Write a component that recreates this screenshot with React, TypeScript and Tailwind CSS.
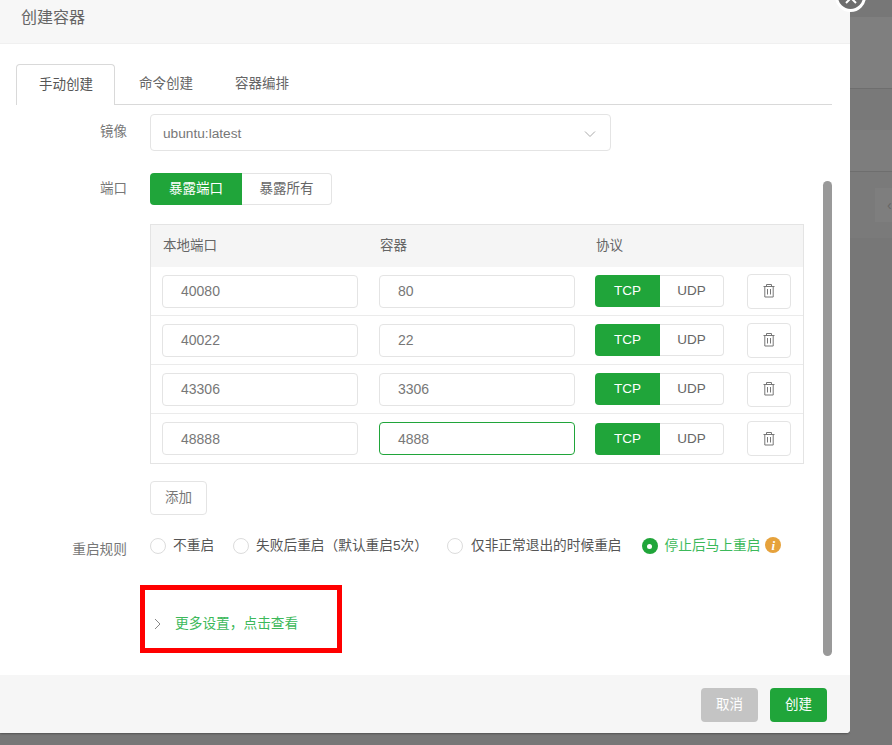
import React from "react";

const ports = [
    { local: "40080", target: "80" },
    { local: "40022", target: "22" },
    { local: "43306", target: "3306" },
    { local: "48888", target: "4888", focused: true },
];

const restartRules = [
    { label: "不重启", gap: "mr-[19px]", textGap: "mr-[7px]" },
    { label: "失败后重启（默认重启5次）", gap: "mr-[19px]", textGap: "mr-[7px]" },
    { label: "仅非正常退出的时候重启", gap: "mr-[20px]", textGap: "mr-[8px]" },
];

function TrashIcon() {
    return (
        <svg width="16" height="16" viewBox="0 0 16 16" fill="none" stroke="#777" strokeWidth="1">
            <path d="M2.5 3.5h11M5.5 3.5v-2h5v2M3.8 3.5v10.5h8.4V3.5" />
            <path d="M6.5 6v5.5M9.5 6v5.5" />
        </svg>
    );
}

function Segment({ left, right, leftWidth, textClass = "" }: { left: string; right: string; leftWidth: string; textClass?: string }) {
    return (
        <div className="flex h-[32px]">
            <button className={`${leftWidth} ${textClass} rounded-l bg-[#20a53a] text-white`}>{left}</button>
            <button className={`${textClass} flex-1 rounded-r border border-l-0 border-[#e4e4e4] bg-white text-[#666]`}>{right}</button>
        </div>
    );
}

function FormRow({ label, children }: { label: string; children: React.ReactNode }) {
    return (
        <div className="flex items-center">
            <label className="mr-[23px] w-[111px] text-right text-[#777]">{label}</label>
            {children}
        </div>
    );
}

export default function App() {
    return (
        <div className="relative flex h-[745px] flex-col overflow-hidden bg-[#777] font-['Liberation_Sans','Noto_Sans_CJK_SC',sans-serif] text-[13.5px] text-[#666]">
            <div className="flex">
                <div className="flex h-[733px] w-[850px] flex-col rounded-br bg-white shadow-[0_1px_2px_rgba(0,0,0,0.3)]">
                    <div className="flex h-[44px] items-center border-b border-[#f0f0f0] bg-[#f7f7f7] pb-[7px] pl-[21px] text-[16px] leading-none text-[#666]">
                        创建容器
                    </div>

                    <div className="relative flex-1 px-4 pt-[20px]">
                        <div className="flex h-[41px] w-[816px] border-b border-[#d9d9d9]">
                            <div className="-mb-px flex h-[41px] items-center rounded-t border border-b-0 border-[#d9d9d9] bg-white pl-[22px] pr-[21px] text-[#555]">
                                手动创建
                            </div>
                            <div className="ml-[3px] flex items-center px-[21px]">命令创建</div>
                            <div className="flex items-center px-[21px]">容器编排</div>
                        </div>

                        <div className="mt-[9px]">
                            <FormRow label="镜像">
                                <div className="flex h-[37px] w-[461px] items-center justify-between rounded border border-[#e4e4e4] pl-3 pr-[14px] pt-[3px] text-[13.7px] text-[#777]">
                                    <span>ubuntu:latest</span>
                                    <svg width="12" height="8" viewBox="0 0 12 8" fill="none" stroke="#aaa" strokeWidth="1">
                                        <path d="M1 1.5l5 5 5-5" />
                                    </svg>
                                </div>
                            </FormRow>
                        </div>

                        <div className="mt-[22px]">
                            <FormRow label="端口">
                                <div className="w-[182px]">
                                    <Segment left="暴露端口" right="暴露所有" leftWidth="w-[92px]" />
                                </div>
                            </FormRow>
                        </div>

                        <div className="ml-[134px] mt-[19px] w-[654px] border border-[#e4e4e4]">
                            <div className="flex h-[42px] items-center bg-[#f5f5f5] pl-[12px]">
                                <span className="w-[217px]">本地端口</span>
                                <span className="w-[216px]">容器</span>
                                <span>协议</span>
                            </div>
                            {ports.map((port, idx) => (
                                <div
                                    key={port.local}
                                    className={`flex h-[49px] items-center pl-[11px] ${idx < ports.length - 1 ? "border-b border-[#ebebeb]" : ""}`}
                                >
                                    <div className="flex h-[33px] w-[196px] items-center rounded border border-[#e4e4e4] pl-[18px] pt-[1px] text-[14px] text-[#777]">
                                        {port.local}
                                    </div>
                                    <div
                                        className={`ml-[21px] flex h-[33px] w-[196px] items-center rounded border pl-[18px] pt-[1px] text-[14px] text-[#777] ${port.focused ? "border-[#20a53a]" : "border-[#e4e4e4]"}`}
                                    >
                                        {port.target}
                                    </div>
                                    <div className="ml-[20px] w-[129px]">
                                        <Segment left="TCP" right="UDP" leftWidth="w-[65px]" textClass="pt-[1px]" />
                                    </div>
                                    <button className="ml-[23px] flex h-[35px] w-[44px] items-center justify-center rounded border border-[#e4e4e4]">
                                        <TrashIcon />
                                    </button>
                                </div>
                            ))}
                        </div>

                        <button className="ml-[134px] mt-[17px] block h-[34px] w-[57px] rounded border border-[#e4e4e4] text-[#777]">
                            添加
                        </button>

                        <div className="mt-[21px] flex h-[20px] items-center">
                            <label className="mr-[23px] mt-[8px] w-[111px] whitespace-nowrap text-right text-[13.7px] text-[#777]">重启规则</label>
                            {restartRules.map((rule) => (
                                <div key={rule.label} className={`flex items-center ${rule.gap}`}>
                                    <span className={`h-4 w-4 rounded-full border border-[#dcdcdc] ${rule.textGap}`} />
                                    <span className="text-[13.7px] text-[#555]">{rule.label}</span>
                                </div>
                            ))}
                            <span className="mr-[7px] flex h-4 w-4 items-center justify-center rounded-full bg-[#20a53a]">
                                <span className="h-[5px] w-[5px] rounded-full bg-white" />
                            </span>
                            <span className="text-[13.7px] text-[#3cb95a]">停止后马上重启</span>
                            <span className="mb-[2px] ml-[5px] flex h-4 w-4 items-center justify-center rounded-full bg-[#e6a23c] font-['Liberation_Serif',serif] text-[13px] font-bold italic leading-none text-white">
                                i
                            </span>
                        </div>

                        <div className="ml-[124px] mt-[29px] flex h-[68px] w-[202px] items-center border-[5px] border-[#ff0000] pl-[9px] pt-[10px]">
                            <svg width="7" height="12" viewBox="0 0 7 12" fill="none" stroke="#888" strokeWidth="1">
                                <path d="M1 1l5 5-5 5" />
                            </svg>
                            <span className="ml-[14px] whitespace-nowrap text-[13.7px] text-[#3cb95a]">更多设置，点击查看</span>
                        </div>

                        <div className="absolute bottom-[19px] right-[18px] top-[137px] w-[9px] rounded-full bg-[#999]" />
                    </div>

                    <div className="flex h-[58px] items-start justify-end gap-[12px] rounded-br bg-[#f6f6f6] pr-[23px] pt-[13px]">
                        <button className="h-[34px] w-[57px] rounded bg-[#c4c4c4] text-white">取消</button>
                        <button className="h-[34px] w-[57px] rounded bg-[#20a53a] text-white">创建</button>
                    </div>
                </div>

                <div className="flex flex-1 flex-col bg-[#7b7b7b]">
                    <div className="h-[17px] bg-[#777]" />
                    <div className="h-[72px] border-b border-[#6e6e6e] bg-[#7f7f7f]" />
                    <div className="h-[41px] bg-[#797979]" />
                    <div className="h-[42px] border-b border-[#6e6e6e] bg-[#7d7d7d]" />
                    <div className="flex h-[66px] items-center justify-end bg-[#7a7a7a]">
                        <div className="flex h-[34px] w-[17px] items-center bg-[#7e7e7e] pl-[12px] text-[14px] text-[#666]">‹</div>
                    </div>
                    <div className="flex-1 bg-[#777]" />
                </div>
            </div>

            <div className="absolute left-[835px] top-[-19px] flex h-[31px] w-[31px] items-end justify-center rounded-full border-[3px] border-white bg-[#6e6e6e] pb-[5px]">
                <svg width="12" height="12" viewBox="0 0 12 12" stroke="#fff" strokeWidth="2" fill="none">
                    <path d="M1 1l10 10M11 1L1 11" />
                </svg>
            </div>
        </div>
    );
}
